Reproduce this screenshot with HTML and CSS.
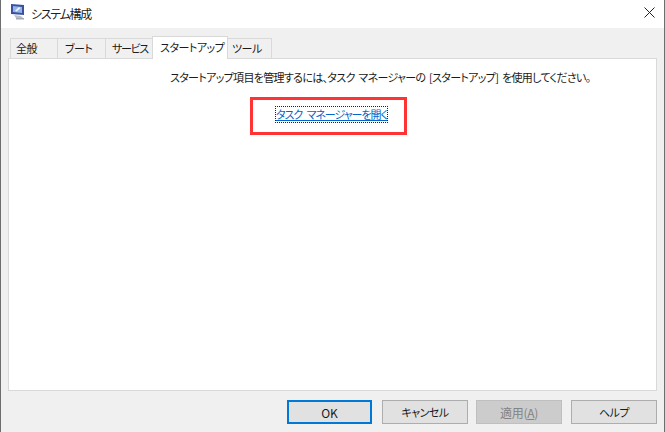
FILE: index.html
```html
<!DOCTYPE html>
<html lang="ja">
<head>
    <meta charset="UTF-8">
    <title>システム構成</title>
    <link rel="stylesheet" href="styles.css">
</head>
<body>
    <div id="window">
        <!-- タイトルバー -->
        <div class="titlebar">
            <svg class="app-icon" width="16" height="16" viewBox="0 0 16 16">
                <path d="M1 0l13 1v10L1 10z" fill="#3d4f9e"/>
                <path d="M3 2l9 1v6L3 8z" fill="#8fb6ea"/>
                <path d="M5 7l4-4 1.500 1-4 3.500z" fill="#f4f8ff"/>
                <path d="M4 11l7 1 2 2-7 0z" fill="#b9bec9"/>
                <path d="M6 14h8v1.500H6z" fill="#a4a8b2"/>
            </svg>
            <span class="title">システム構成</span>
            <svg class="close" width="11" height="11" viewBox="0 0 11 11">
                <path d="M0.500 0.500l10 10M10.500 0.500l-10 10" stroke="#222" stroke-width="1" fill="none"/>
            </svg>
        </div>

        <div class="content">
            <!-- タブ -->
            <div class="tabs">
                <div class="tab">全般</div>
                <div class="tab tab-boot">ブート</div>
                <div class="tab tab-service">サービス</div>
                <div class="tab active">スタートアップ</div>
                <div class="tab tab-tools">ツール</div>
            </div>

            <div class="panel">
                <p class="message">スタートアップ項目を管理するには、タスク マネージャーの [スタートアップ] を使用してください。</p>
                <div class="link-row">
                    <div class="highlight">
                        <a class="link" href="#">タスク マネージャーを開く</a>
                    </div>
                </div>
            </div>

            <!-- ボタン -->
            <div class="buttons">
                <button class="default">OK</button>
                <button>キャンセル</button>
                <button class="disabled">適用(<u>A</u>)</button>
                <button>ヘルプ</button>
            </div>
        </div>
    </div>
</body>
</html>
```

FILE: styles.css
```css
html, body {
    margin: 0;
    height: 100%;
    overflow: hidden;
}

body {
    font-family: "Noto Sans CJK JP", "Liberation Sans", sans-serif;
    font-size: 11px;
    letter-spacing: -0.5px;
    font-feature-settings: "palt";
    color: #1a1a1a;
}

#window {
    box-sizing: border-box;
    height: 432px;
    display: flex;
    flex-direction: column;
    border-left: 1px solid #6e6e6e;
    border-right: 1px solid #6e6e6e;
    background-color: #f0f0f0;
}

.titlebar {
    display: flex;
    align-items: center;
    height: 28px;
    padding: 0 9px 4px 9px;
    box-sizing: border-box;
    background-color: white;
}

.app-icon {
    margin-right: 5px;
}

.title {
    flex: 1;
    margin-top: 2px;
    font-size: 12px;
    letter-spacing: -1.3px;
    color: #222;
}

.content {
    flex: 1;
    display: flex;
    flex-direction: column;
    padding: 8px 7px 8px 7px;
}

.tabs {
    display: flex;
    height: 22px;
    padding-left: 2px;
    align-items: flex-end;
}

.tab {
    box-sizing: border-box;
    height: 20px;
    width: 48px;
    border: 1px solid #d9d9d9;
    border-bottom: none;
    margin-right: -1px;
    padding-left: 5px;
    line-height: 19px;
    background-color: #f0f0f0;
    white-space: nowrap;
}

.tab-boot {
    width: 49px;
    padding-left: 7px;
}

.tab-service {
    padding-left: 6px;
    letter-spacing: -1.3px;
}

.tab.active {
    position: relative;
    z-index: 1;
    width: 76px;
    height: 23px;
    margin-bottom: -1px;
    padding-left: 7px;
    line-height: 21px;
    background-color: white;
}

.tab-tools {
    width: 45px;
    padding-left: 4px;
}

.panel {
    flex: 1;
    background-color: white;
    border: 1px solid #d9d9d9;
}

.message {
    margin: 0;
    padding: 9px 0 0 161px;
    line-height: 18px;
    letter-spacing: -0.68px;
    word-spacing: 2px;
    white-space: nowrap;
}

.link-row {
    padding: 11px 0 0 241px;
}

.highlight {
    box-sizing: border-box;
    width: 157px;
    height: 38px;
    border: 3px solid #ff3333;
    padding: 7px 0 0 23px;
}

.link {
    display: block;
    width: 111px;
    height: 15px;
    line-height: 15px;
    letter-spacing: -1.05px;
    word-spacing: 3px;
    outline: 1px dotted #222;
    color: #0066cc;
    white-space: nowrap;
}

.buttons {
    display: flex;
    justify-content: flex-end;
    gap: 9px;
    padding: 9px 0 0 0;
}

button {
    box-sizing: border-box;
    width: 86px;
    height: 24px;
    padding: 0;
    border: 1px solid #adadad;
    background-color: #e1e1e1;
    color: #1a1a1a;
    font-family: inherit;
    font-size: 11px;
    letter-spacing: -0.5px;
    font-feature-settings: inherit;
}

button.default {
    width: 85px;
    margin-right: 1px;
    border: 2px solid #0078d7;
    font-size: 12px;
    letter-spacing: 0;
}

button.disabled {
    margin-left: -1px;
    background-color: #cccccc;
    border-color: #bfbfbf;
    color: #838383;
    font-size: 12px;
    letter-spacing: -0.3px;
}
```
